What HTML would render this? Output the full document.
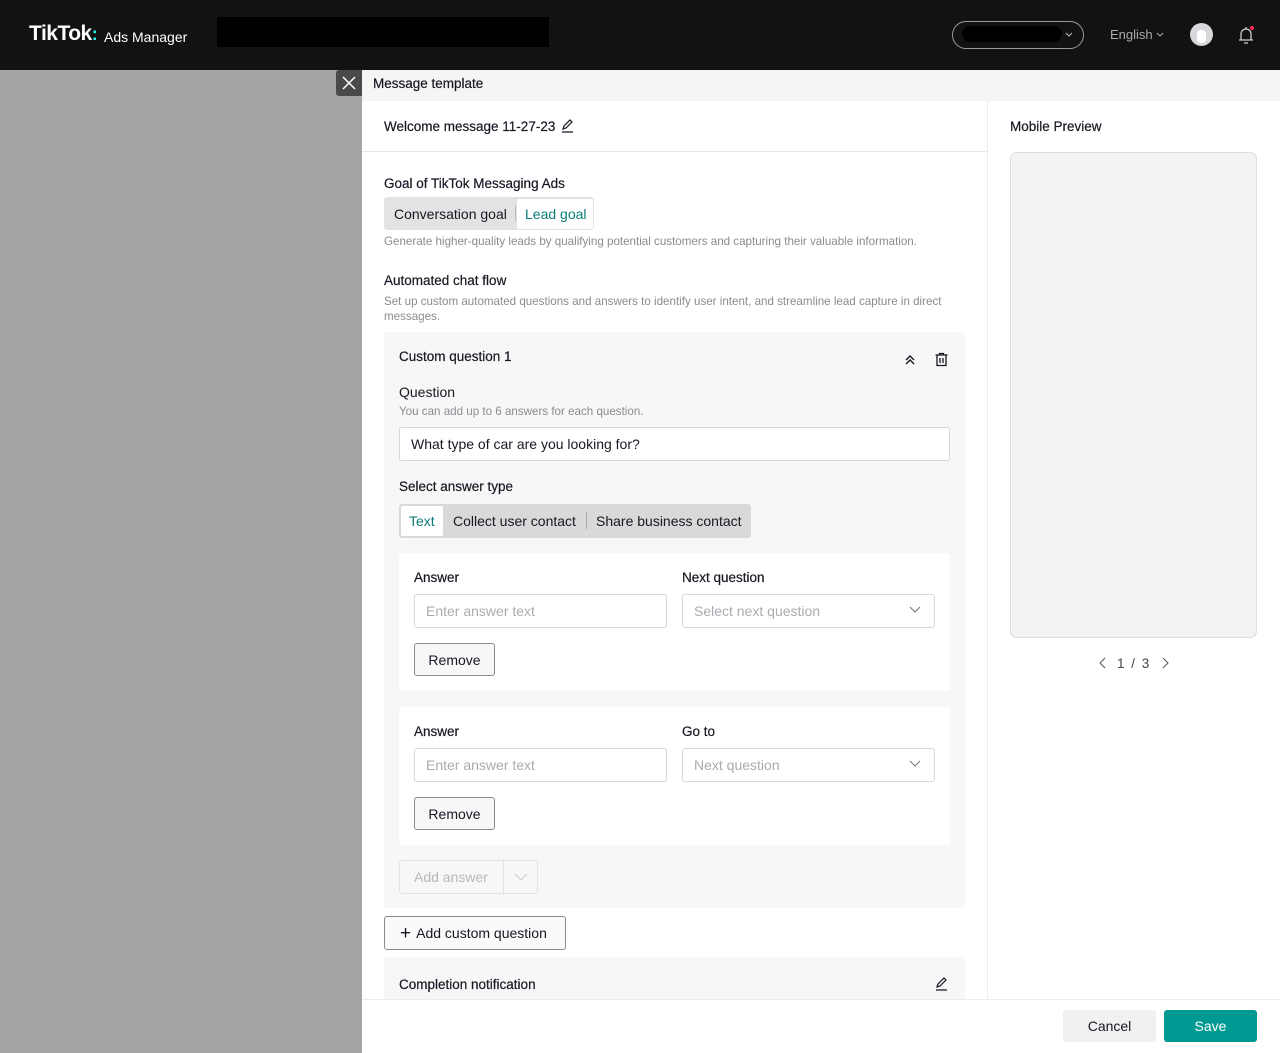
<!DOCTYPE html>
<html><head><meta charset="utf-8"><style>
*{box-sizing:border-box;margin:0;padding:0}
body{width:1280px;height:1053px;position:relative;overflow:hidden;font-family:"Liberation Sans",Arial,sans-serif;color:#161823;background:#fff}
.a{position:absolute}
.t14{font-size:14px}
.t13{font-size:13.5px;-webkit-text-stroke:0.2px #161823}
.g{color:#8a8b91}
.in{position:absolute;background:#fff;border:1px solid #d8d8da;border-radius:3px;font-size:14px;color:#aaabb0;padding:0 11px;display:flex;align-items:center}
.btn{position:absolute;border:1px solid #8a8b91;border-radius:3px;background:#f7f7f7;font-size:14px;display:flex;align-items:center;justify-content:center}
</style></head><body>
<div class="a" style="left:0;top:0;width:1280px;height:70px;background:#121212"></div>
<div class="a" style="left:29px;top:22px;color:#fff;font-size:21px;font-weight:bold;letter-spacing:-0.5px">TikTok<span style="color:#25f4ee;font-size:18px">:</span></div>
<div class="a" style="left:104px;top:29px;color:#fff;font-size:14px">Ads Manager</div>
<div class="a" style="left:217px;top:17px;width:332px;height:30px;background:#000"></div>
<div class="a" style="left:952px;top:21px;width:132px;height:28px;border:1px solid #9a9a9a;border-radius:14px"></div>
<div class="a" style="left:962px;top:26px;width:100px;height:16px;background:#000;border-radius:8px"></div>
<svg class="a" style="left:1064px;top:30px" width="10" height="10"><path d="M2 3l3 3 3-3" stroke="#bbb" fill="none"/></svg>
<div class="a" style="left:1110px;top:27px;color:#aaa;font-size:13px">English</div>
<svg class="a" style="left:1155px;top:30px" width="10" height="10"><path d="M2 3l3 3 3-3" stroke="#aaa" fill="none"/></svg>
<div class="a" style="left:1190px;top:23px;width:23px;height:23px;border-radius:50%;background:#d8d8dc"></div>
<div class="a" style="left:1197px;top:30px;width:9px;height:13px;border-radius:4px;background:#fff"></div>
<svg class="a" style="left:1237px;top:24px" width="20" height="22"><path d="M4 16V10a5 5 0 0 1 10 0v6zM2 16h14M7 19h4M9 3v2" stroke="#ccc" stroke-width="1.3" fill="none"/><circle cx="15" cy="4" r="2" fill="#fe2c55"/></svg>
<div class="a" style="left:0;top:70px;width:362px;height:983px;background:#a5a5a5"></div>
<div class="a" style="left:336px;top:70px;width:26px;height:26px;background:#4a4a4c;border-radius:3px 0 0 3px"></div>
<svg class="a" style="left:342px;top:76px" width="14" height="14"><path d="M1 1l12 12M13 1L1 13" stroke="#fff" stroke-width="1.5"/></svg>
<div class="a" style="left:362px;top:70px;width:918px;height:31px;background:#f5f5f5"></div>
<div class="a t13" style="left:373px;top:76px">Message template</div>
<div class="a" style="left:987px;top:101px;width:1px;height:898px;background:#ececec"></div>
<div class="a" style="left:362px;top:151px;width:625px;height:1px;background:#e8e8e8"></div>
<div class="a t13" style="left:384px;top:119px">Welcome message 11-27-23</div>
<svg class="a" style="left:560px;top:118px" width="15" height="15"><path d="M3 11l1-3 6-6 2 2-6 6zM2 14h11" stroke="#161823" stroke-width="1.2" fill="none"/></svg>
<div class="a t13" style="left:384px;top:176px">Goal of TikTok Messaging Ads</div>
<div class="a" style="left:384px;top:197px;width:210px;height:33px;background:#e3e3e3;border-radius:3px"></div>
<div class="a t14" style="left:394px;top:206px">Conversation goal</div>
<div class="a" style="left:515px;top:205px;width:1px;height:16px;background:#bbb"></div>
<div class="a" style="left:517px;top:199px;width:76px;height:30px;background:#fff;border-radius:2px"></div>
<div class="a t14" style="left:525px;top:206px;color:#0a7d78">Lead goal</div>
<div class="a g" style="left:384px;top:235px;font-size:11.6px">Generate higher-quality leads by qualifying potential customers and capturing their valuable information.</div>
<div class="a t13" style="left:384px;top:273px">Automated chat flow</div>
<div class="a g" style="left:384px;top:294px;font-size:11.6px;width:585px;line-height:15px">Set up custom automated questions and answers to identify user intent, and streamline lead capture in direct messages.</div>
<div class="a" style="left:384px;top:332px;width:581px;height:576px;background:#f7f7f7;border-radius:3px"></div>
<div class="a t13" style="left:399px;top:349px">Custom question 1</div>
<svg class="a" style="left:903px;top:352px" width="14" height="14"><path d="M3 8l4-4 4 4M3 12l4-4 4 4" stroke="#161823" stroke-width="1.4" fill="none"/></svg>
<svg class="a" style="left:934px;top:352px" width="15" height="15"><path d="M1.5 3h12M5.5 3V1.5h4V3M3 3v10.5h9V3M6 6v5M9 6v5" stroke="#161823" stroke-width="1.3" fill="none"/></svg>
<div class="a t14" style="left:399px;top:384px">Question</div>
<div class="a g" style="left:399px;top:405px;font-size:11.6px">You can add up to 6 answers for each question.</div>
<div class="in" style="left:399px;top:427px;width:551px;height:34px;color:#161823">What type of car are you looking for?</div>
<div class="a t13" style="left:399px;top:479px">Select answer type</div>
<div class="a" style="left:399px;top:504px;width:352px;height:34px;background:#d9d9d9;border-radius:3px"></div>
<div class="a" style="left:401px;top:506px;width:42px;height:30px;background:#fff;border-radius:2px"></div>
<div class="a t14" style="left:409px;top:513px;color:#0a7d78">Text</div>
<div class="a t14" style="left:453px;top:513px">Collect user contact</div>
<div class="a" style="left:586px;top:512px;width:1px;height:17px;background:#aaa"></div>
<div class="a t14" style="left:596px;top:513px">Share business contact</div>
<div class="a" style="left:399px;top:553px;width:551px;height:138px;background:#fff;border-radius:3px"></div>
<div class="a t13" style="left:414px;top:570px">Answer</div>
<div class="a t13" style="left:682px;top:570px">Next question</div>
<div class="in" style="left:414px;top:594px;width:253px;height:34px">Enter answer text</div>
<div class="in" style="left:682px;top:594px;width:253px;height:34px">Select next question</div>
<svg class="a" style="left:909px;top:605px" width="12" height="10"><path d="M1 2l5 5 5-5" stroke="#777" fill="none"/></svg>
<div class="btn" style="left:414px;top:643px;width:81px;height:33px">Remove</div>
<div class="a" style="left:399px;top:707px;width:551px;height:138px;background:#fff;border-radius:3px"></div>
<div class="a t13" style="left:414px;top:724px">Answer</div>
<div class="a t13" style="left:682px;top:724px">Go to</div>
<div class="in" style="left:414px;top:748px;width:253px;height:34px">Enter answer text</div>
<div class="in" style="left:682px;top:748px;width:253px;height:34px">Next question</div>
<svg class="a" style="left:909px;top:759px" width="12" height="10"><path d="M1 2l5 5 5-5" stroke="#777" fill="none"/></svg>
<div class="btn" style="left:414px;top:797px;width:81px;height:33px">Remove</div>
<div class="a" style="left:399px;top:860px;width:139px;height:34px;border:1px solid #e3e3e3;border-radius:3px;background:#f7f7f7"></div>
<div class="a" style="left:503px;top:861px;width:1px;height:32px;background:#e3e3e3"></div>
<div class="a t14" style="left:414px;top:869px;color:#b8b8bc">Add answer</div>
<svg class="a" style="left:514px;top:872px" width="14" height="10"><path d="M1 2l6 6 6-6" stroke="#ccc" fill="none"/></svg>
<div class="btn" style="left:384px;top:916px;width:182px;height:34px;background:#fafafa;justify-content:flex-start;padding-left:15px"><span style="font-size:19px;margin-right:5px;line-height:1">+</span>Add custom question</div>
<div class="a" style="left:384px;top:957px;width:581px;height:42px;background:#f7f7f7"></div>
<div class="a t13" style="left:399px;top:977px">Completion notification</div>
<svg class="a" style="left:934px;top:976px" width="15" height="15"><path d="M3 11l1-3 6-6 2 2-6 6zM2 14h11" stroke="#161823" stroke-width="1.2" fill="none"/></svg>
<div class="a t13" style="left:1010px;top:119px">Mobile Preview</div>
<div class="a" style="left:1010px;top:152px;width:247px;height:486px;background:#f3f3f3;border:1px solid #ddd;border-radius:7px"></div>
<svg class="a" style="left:1098px;top:657px" width="10" height="12"><path d="M7 1L2 6l5 5" stroke="#555" fill="none"/></svg>
<div class="a t13" style="left:1117px;top:656px;color:#444;word-spacing:3px;-webkit-text-stroke:0">1 / 3</div>
<svg class="a" style="left:1160px;top:657px" width="10" height="12"><path d="M3 1l5 5-5 5" stroke="#555" fill="none"/></svg>
<div class="a" style="left:362px;top:999px;width:918px;height:1px;background:#ececec"></div>
<div class="a" style="left:1063px;top:1010px;width:93px;height:32px;background:#f1f1f2;border-radius:3px;font-size:14px;display:flex;align-items:center;justify-content:center">Cancel</div>
<div class="a" style="left:1164px;top:1010px;width:93px;height:32px;background:#009a93;border-radius:3px;font-size:14px;color:#fff;display:flex;align-items:center;justify-content:center">Save</div>
</body></html>
